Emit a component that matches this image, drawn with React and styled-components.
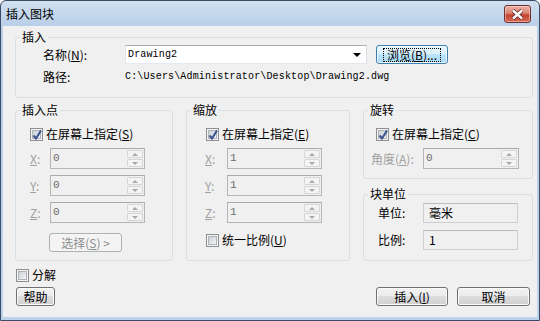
import styled, { createGlobalStyle } from "styled-components";

const GlobalStyle = createGlobalStyle`
  html, body { margin: 0; padding: 0; background: #ffffff; }
  body {
    font-family: "Noto Sans CJK SC", "Liberation Sans", sans-serif;
    font-size: 12px;
    color: #000;
  }
`;

const ui = `"Noto Sans CJK SC", "Liberation Sans", sans-serif`;
const mono = `"Liberation Mono", "Noto Sans CJK SC", monospace`;

const Window = styled.div`
  width: 540px;
  height: 321px;
  box-sizing: border-box;
  border: 1px solid #3a4c66;
  border-radius: 6px 6px 0 0;
  background: linear-gradient(#d2e0f0, #b8cfe9 25px, #bcd3ec);
  display: flex;
  flex-direction: column;
  overflow: hidden;
`;

const TitleBar = styled.div`
  height: 25px;
  flex: none;
  display: flex;
  align-items: center;
  justify-content: space-between;
  padding: 0 8px 0 5px;
`;

const Title = styled.span`
  font: 12px/14px ${ui};
  color: #000;
  margin-top: 1px;
`;

const CloseButton = styled.div`
  width: 27px;
  height: 18px;
  box-sizing: border-box;
  margin-top: 1px;
  border: 1px solid #6e3030;
  border-radius: 3px;
  background: linear-gradient(#eab1a7, #d98473 45%, #c4432f 55%, #d46a55);
  box-shadow: inset 0 0 0 1px rgba(255, 220, 210, 0.5);
  display: flex;
  align-items: center;
  justify-content: center;
`;

const Client = styled.div`
  flex: 1;
  margin: 0 2px 3px 2px;
  background: #f0f0f0;
  padding: 4px 4px 0 12px;
  display: flex;
  flex-direction: column;
`;

const Group = styled.fieldset`
  margin: 0;
  padding: 0;
  min-width: 0;
  box-sizing: border-box;
  width: ${(p) => (p.$w ? `${p.$w}px` : "auto")};
  height: ${(p) => p.$h}px;
  border: 1px solid #d5dfe5;
  border-radius: 3px;
`;

const Legend = styled.legend`
  margin-left: 4px;
  padding: 0 2px;
  font: 12px/14px ${ui};
  color: #000;
`;

const Body = styled.div`
  padding: ${(p) => p.$pad};
  display: flex;
  flex-direction: column;
`;

const Row = styled.div`
  display: flex;
  align-items: center;
  margin-top: ${(p) => p.$mt || 0}px;
`;

const Label = styled.span`
  width: ${(p) => p.$w}px;
  flex: none;
  font: 12px/14px ${ui};
  color: ${(p) => (p.$disabled ? "#a0a0a0" : "#000")};
`;

const Combo = styled.div`
  width: 242px;
  height: 19px;
  box-sizing: border-box;
  border: 1px solid #abadb3;
  border-color: #abadb3 #dbdfe6 #e3e9ef #e2e3ea;
  background: #fff;
  display: flex;
  align-items: center;
  justify-content: space-between;
  padding: 0 5px 0 2px;
  font: 10px/14px ${mono};
  letter-spacing: 0.15px;
`;

const Arrow = styled.span`
  width: 0;
  height: 0;
  border-left: 4px solid transparent;
  border-right: 4px solid transparent;
  border-top: 4px solid #000;
`;

const Path = styled.span`
  font: 10px/14px ${mono};
  letter-spacing: 0.15px;
  color: #000;
`;

const Button = styled.button`
  width: ${(p) => p.$w}px;
  height: 19px;
  flex: none;
  box-sizing: border-box;
  margin-left: ${(p) => p.$ml || 0}px;
  padding: 0;
  border: 1px solid #707070;
  border-radius: 3px;
  background: linear-gradient(#f2f2f2 0%, #ebebeb 50%, #dddddd 50%, #cfcfcf 100%);
  box-shadow: inset 0 0 0 1px #fbfbfb;
  font: 12px/14px ${ui};
  color: #000;
  display: flex;
  align-items: center;
  justify-content: center;

  &[data-focus] {
    border-color: #3c7fb1;
    background: linear-gradient(#eaf6fd 0%, #d9f0fc 50%, #bee6fd 50%, #a7d9f5 100%);
    box-shadow: inset 0 0 0 1px #f2fbff;
  }

  &:disabled {
    border-color: #adb2b5;
    background: #f4f4f4;
    box-shadow: none;
    color: #8d8d8d;
  }
`;

const FocusRing = styled.span`
  padding: 0 3px;
  border: 1px dotted #000;
  line-height: 12px;
`;

const CheckRow = styled.label`
  display: flex;
  align-items: center;
  gap: 3px;
  margin-left: ${(p) => p.$ml || 0}px;
  margin-top: ${(p) => p.$mt || 0}px;
  height: 14px;
  font: 12px/14px ${ui};
  color: #000;
`;

const Box = styled.span`
  width: 13px;
  height: 13px;
  flex: none;
  box-sizing: border-box;
  border: 1px solid #8f8f8f;
  padding: 1px;
  background: #f4f4f4;
  position: relative;
  display: flex;

  &::before {
    content: "";
    flex: 1;
    border: 1px solid #aeb3b9;
    background: linear-gradient(135deg, #cbcfd5, #f6f6f6);
  }

  svg {
    position: absolute;
    left: -1px;
    top: -2px;
  }
`;

const SpinBox = styled.div`
  width: ${(p) => p.$w}px;
  height: 21px;
  box-sizing: border-box;
  border: 1px solid #b5b5b5;
  border-top-color: #a9a9a9;
  background: #f0f0f0;
  display: flex;
`;

const SpinValue = styled.span`
  flex: 1;
  padding-left: 2px;
  font: 11px/19px ${mono};
  color: #6d6d6d;
`;

const SpinButtons = styled.div`
  width: 16px;
  display: flex;
  flex-direction: column;
  gap: 1px;
  padding: 1px 1px 1px 0;
`;

const SpinButton = styled.div`
  flex: 1;
  border: 1px solid #d6d6d6;
  border-radius: 1px;
  background: #f4f4f4;
  display: flex;
  align-items: center;
  justify-content: center;

  &::after {
    content: "";
    border-left: 3px solid transparent;
    border-right: 3px solid transparent;
    ${(p) => (p.$down ? "border-top: 3px solid #a8a8a8;" : "border-bottom: 3px solid #a8a8a8;")}
  }
`;

const Field = styled.div`
  width: 95px;
  height: 20px;
  box-sizing: border-box;
  border: 1px solid #cfcfcf;
  border-top-color: #bdbdbd;
  background: #f0f0f0;
  padding-left: 5px;
  font: 12px/18px ${ui};
  color: #000;
`;

const Columns = styled.div`
  display: flex;
  gap: 13px;
  margin-top: 5px;
  height: 158px;
`;

const Stack = styled.div`
  display: flex;
  flex-direction: column;
  gap: 8px;
`;

const Footer = styled.div`
  display: flex;
  justify-content: space-between;
  align-items: center;
  margin-top: 5px;
  padding: 0 3px 0 1px;
`;

const ButtonGroup = styled.div`
  display: flex;
  gap: 9px;
`;

const U = styled.span`
  text-decoration: underline;
`;

function Check({ checked, children, ml, mt }) {
  return (
    <CheckRow $ml={ml} $mt={mt}>
      <Box>
        {checked && (
          <svg width="14" height="15" viewBox="0 0 14 15">
            <path d="M3.5 8.5 L6 11.5 L11 3.5" fill="none" stroke="#3d5591" strokeWidth="2.2" />
          </svg>
        )}
      </Box>
      <span>{children}</span>
    </CheckRow>
  );
}

function Spin({ label, value, labelW, w = 95, mt }) {
  return (
    <Row $mt={mt}>
      <Label $w={labelW} $disabled>
        {label}
      </Label>
      <SpinBox $w={w}>
        <SpinValue>{value}</SpinValue>
        <SpinButtons>
          <SpinButton />
          <SpinButton $down />
        </SpinButtons>
      </SpinBox>
    </Row>
  );
}

export default function App() {
  return (
    <>
      <GlobalStyle />
      <Window>
        <TitleBar>
          <Title>插入图块</Title>
          <CloseButton>
            <svg width="13" height="11" viewBox="0 0 13 11">
              <path d="M2 1.5 L11 9.5 M11 1.5 L2 9.5" stroke="#5a2020" strokeWidth="4" />
              <path d="M2 1.5 L11 9.5 M11 1.5 L2 9.5" stroke="#ffffff" strokeWidth="2.4" />
            </svg>
          </CloseButton>
        </TitleBar>
        <Client>
          <Group $h={68}>
            <Legend>插入</Legend>
            <Body $pad="1px 0 0 27px">
              <Row>
                <Label $w={82}>
                  名称(<U>N</U>):
                </Label>
                <Combo>
                  <span>Drawing2</span>
                  <Arrow />
                </Combo>
                <Button $w={72} $ml={9} data-focus="">
                  <FocusRing>
                    浏览(<U>B</U>)...
                  </FocusRing>
                </Button>
              </Row>
              <Row $mt={6}>
                <Label $w={82}>路径:</Label>
                <Path>C:\Users\Administrator\Desktop\Drawing2.dwg</Path>
              </Row>
            </Body>
          </Group>

          <Columns>
            <Group $w={159} $h={158}>
              <Legend>插入点</Legend>
              <Body $pad="10px 0 0 14px">
                <Check checked>
                  在屏幕上指定(<U>S</U>)
                </Check>
                <Spin label={<><U>X</U>:</>} value="0" labelW={20} mt={7} />
                <Spin label={<><U>Y</U>:</>} value="0" labelW={20} mt={6} />
                <Spin label={<><U>Z</U>:</>} value="0" labelW={20} mt={6} />
                <Row $mt={10}>
                  <Button $w={73} $ml={19} disabled>
                    选择(<U>S</U>) &gt;
                  </Button>
                </Row>
              </Body>
            </Group>

            <Group $w={165} $h={158}>
              <Legend>缩放</Legend>
              <Body $pad="10px 0 0 18px">
                <Check checked ml={1}>
                  在屏幕上指定(<U>E</U>)
                </Check>
                <Spin label={<><U>X</U>:</>} value="1" labelW={22} mt={7} />
                <Spin label={<><U>Y</U>:</>} value="1" labelW={22} mt={6} />
                <Spin label={<><U>Z</U>:</>} value="1" labelW={22} mt={6} />
                <Check ml={1} mt={10}>
                  统一比例(<U>U</U>)
                </Check>
              </Body>
            </Group>

            <Stack>
              <Group $w={170} $h={76}>
                <Legend>旋转</Legend>
                <Body $pad="10px 0 0 7px">
                  <Check checked ml={5}>
                    在屏幕上指定(<U>C</U>)
                  </Check>
                  <Spin label={<>角度(<U>A</U>):</>} value="0" labelW={52} w={96} mt={7} />
                </Body>
              </Group>
              <Group $w={170} $h={74}>
                <Legend>块单位</Legend>
                <Body $pad="2px 0 0 14px">
                  <Row>
                    <Label $w={45}>单位:</Label>
                    <Field>毫米</Field>
                  </Row>
                  <Row $mt={7}>
                    <Label $w={45}>比例:</Label>
                    <Field>1</Field>
                  </Row>
                </Body>
              </Group>
            </Stack>
          </Columns>

          <Check ml={1} mt={7}>
            分解
          </Check>

          <Footer>
            <Button $w={39}>帮助</Button>
            <ButtonGroup>
              <Button $w={72}>
                插入(<U>I</U>)
              </Button>
              <Button $w={73}>取消</Button>
            </ButtonGroup>
          </Footer>
        </Client>
      </Window>
    </>
  );
}
